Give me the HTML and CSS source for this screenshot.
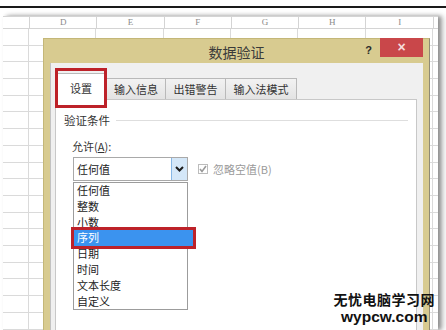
FILE: index.html
```html
<!DOCTYPE html>
<html lang="zh-CN">
<head>
  <meta charset="UTF-8" />
  <meta name="viewport" content="width=device-width, initial-scale=1.0" />
  <title>数据验证</title>
  <link rel="stylesheet" href="styles.css">
</head>
<body>
  <div class="rule"></div>

  <div class="sheet">
    <div class="sheet-head">
      <div class="corner"></div>
      <div class="col">D</div>
      <div class="col">E</div>
      <div class="col">F</div>
      <div class="col">G</div>
      <div class="col">H</div>
      <div class="col">I</div>
    </div>
    <div class="sheet-body"></div>
  </div>

  <div class="dialog">
    <div class="titlebar">
      <span class="title">数据验证</span>
      <span class="help">?</span>
      <span class="close">&times;</span>
    </div>
    <div class="client">
      <div class="tabs">
        <div class="tab active">设置<span class="hl"></span></div>
        <div class="tab w60">输入信息</div>
        <div class="tab w61">出错警告</div>
        <div class="tab w71">输入法模式</div>
      </div>
      <div class="panel">
        <div class="group">
          <span>验证条件</span>
          <span class="groupline"></span>
        </div>
        <div class="allow">允许(<u>A</u>):</div>
        <div class="row">
          <div class="select">
            <span class="value">任何值</span>
            <span class="drop">
              <svg width="9" height="6" viewBox="0 0 9 6"><path d="M1 1 L4.5 4.5 L8 1" fill="none" stroke="#1b1b1b" stroke-width="2"/></svg>
            </span>
          </div>
          <span class="check">
            <svg width="8" height="8" viewBox="0 0 8 8"><path d="M1 4 L3 6.5 L7 1" fill="none" stroke="#9a9a9a" stroke-width="1.6"/></svg>
          </span>
          <span class="checklabel">忽略空值(B)</span>
        </div>
        <ul class="list">
          <li>任何值</li>
          <li>整数</li>
          <li>小数</li>
          <li class="sel"><span class="hl2"></span><span class="txt">序列</span></li>
          <li>日期</li>
          <li>时间</li>
          <li>文本长度</li>
          <li>自定义</li>
        </ul>
      </div>
    </div>
  </div>

  <div class="mark">
    <div class="mark-cn">无忧电脑学习网</div>
    <div class="mark-en">wypcw.com</div>
  </div>
</body>
</html>
```

FILE: styles.css
```css
body {
  margin: 0;
  width: 446px;
  height: 330px;
  overflow: hidden;
  position: relative;
  background: #fff;
  font-family: "Noto Sans CJK SC", sans-serif;
  color: #222;
}

.rule { height: 2px; background: #1a1a1a; margin-top: 6px; }

.sheet {
  margin: 8px 0 0 3px;
  width: 435px;
  height: 314px;
  background: #fff;
  box-shadow: 3px 0 4px rgba(0,0,0,0.35), 6px 0 6px rgba(0,0,0,0.15);
}
.sheet-head {
  display: flex;
  height: 11px;
  border-top: 1px solid #d4d4d4;
  border-bottom: 1px solid #d4d4d4;
}
.corner { width: 26px; border-right: 1px solid #d4d4d4; }
.col {
  width: 66.3px;
  border-right: 1px solid #d4d4d4;
  font: 9px/11px "Liberation Serif", serif;
  color: #8a8a8a;
  text-align: center;
}
.sheet-body {
  height: 301px;
  background-image:
    repeating-linear-gradient(to bottom, transparent 0, transparent 15.7px, #dadada 15.7px, #dadada 16.7px),
    linear-gradient(to right, transparent 25px, #dadada 25px, #dadada 26px, transparent 26px),
    repeating-linear-gradient(to right, transparent 0, transparent 66.3px, #dadada 66.3px, #dadada 67.3px);
  background-position: 0 0, 0 0, 26px 0;
}

.dialog {
  position: absolute;
  left: 43px;
  top: 38px;
  width: 387px;
  height: 292px;
  box-sizing: border-box;
  background: #d8cb90;
  border: 1px solid #c4b778;
  border-bottom: none;
  border-right-color: #8f8a74;
}
.titlebar {
  position: relative;
  height: 24px;
  display: flex;
  align-items: center;
  justify-content: center;
}
.title { font-size: 14px; color: #3a3a3a; margin-top: 1px; }
.help {
  position: absolute;
  right: 57px;
  top: 5px;
  font: bold 11px "Liberation Sans", sans-serif;
  color: #2a2a2a;
}
.close {
  position: absolute;
  right: 6px;
  top: -1px;
  width: 43px;
  height: 19px;
  background: #c9474a;
  color: #f6dcdc;
  font: bold 14px/19px "Liberation Sans", sans-serif;
  text-align: center;
}

.client {
  margin: 0 6px;
  height: 267px;
  background: #f0f0f0;
  border-left: 1px solid #c2c2c2;
  padding: 10px 6px 0 4px;
  box-sizing: border-box;
}
.tabs { display: flex; height: 26px; align-items: flex-end; }
.tab {
  position: relative;
  height: 21px;
  width: 60px;
  box-sizing: border-box;
  border: 1px solid #b9b9b9;
  border-bottom: none;
  margin-left: -1px;
  background: linear-gradient(#f2f2f2, #e3e3e3);
  font-size: 11px;
  line-height: 20px;
  text-align: center;
  color: #333;
}
.tab.active {
  width: 52px;
  height: 27px;
  margin-left: 0;
  margin-bottom: -1px;
  background: #fff;
  line-height: 28px;
  z-index: 1;
}
.tab.w61 { width: 61px; }
.tab.w71 { width: 72px; }
.hl {
  position: absolute;
  left: -1px;
  right: -1px;
  top: -6px;
  bottom: -8px;
  border: 3px solid #bd2229;
}

.panel {
  background: #fff;
  border: 1px solid #c8c8c8;
  border-bottom: none;
  height: 231px;
  padding: 12px 8px 0 8px;
  box-sizing: border-box;
  font-size: 11px;
}
.group { display: flex; align-items: center; color: #333; font-size: 11.5px; }
.groupline { flex: 1; height: 1px; background: #dedede; margin-left: 6px; }
.allow { margin: 10px 0 0 8px; color: #333; }
.row { display: flex; align-items: center; margin: 3px 0 0 9px; }
.select {
  display: flex;
  width: 115px;
  height: 24px;
  box-sizing: border-box;
  border: 1px solid #a9a9a9;
  align-items: center;
}
.value { flex: 1; padding-left: 3px; color: #222; }
.drop {
  width: 15px;
  height: 22px;
  background: #d4e7f8;
  border-left: 1px solid #86b7e6;
  display: flex;
  align-items: center;
  justify-content: center;
}
.check {
  width: 10px;
  height: 10px;
  box-sizing: border-box;
  border: 1px solid #bcbcbc;
  margin-left: 10px;
  display: flex;
  align-items: center;
  justify-content: center;
}
.checklabel { margin-left: 5px; color: #9a9a9a; }

.list {
  list-style: none;
  margin: 1px 0 0 9px;
  padding: 0;
  width: 115px;
  box-sizing: border-box;
  border: 1px solid #9c9c9c;
}
.list li {
  height: 15.8px;
  line-height: 15.8px;
  padding-left: 3px;
  color: #222;
}
.list li.sel { position: relative; color: #fff; }
.txt { position: relative; }
.hl2 {
  position: absolute;
  left: -3px;
  right: -9px;
  top: -3px;
  bottom: -3px;
  background: #3b93ef;
  border: 3px solid #bd2229;
}

.mark {
  position: absolute;
  right: 11px;
  top: 291px;
  text-align: center;
  color: #111;
  font-weight: bold;
}
.mark-cn { font-size: 14px; line-height: 16px; letter-spacing: 0.5px; }
.mark-en { font: bold 15.5px/15px "Liberation Sans", sans-serif; margin-top: 2px; }
```
